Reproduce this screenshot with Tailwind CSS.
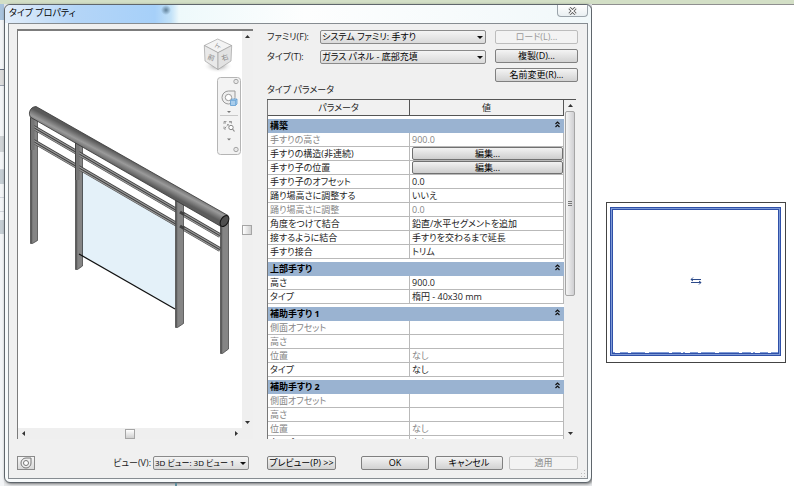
<!DOCTYPE html>
<html lang="ja">
  <head>
    <meta charset="UTF-8" />
    <meta name="viewport" content="width=device-width, initial-scale=1.0" />
    <title>タイプ プロパティ</title>
    <script src="https://cdn.jsdelivr.net/npm/@tailwindcss/browser@4"></script>
  </head>
  <body
    class="h-screen flex flex-col overflow-hidden bg-white font-['Open_Sans','Noto_Sans_CJK_JP',sans-serif] text-[9px] leading-[12px] text-[#1c1c1c] [font-feature-settings:'palt']"
  >
    <!-- Application strip behind the dialog -->
    <div class="h-1 shrink-0 bg-[#d3dfc6]"></div>

    <div class="flex-1 min-h-0 flex">
      <!-- Docked palette, mostly covered -->
      <div class="w-1 shrink-0 flex flex-col bg-[#f3f5f7]">
        <div class="h-4 bg-[#a9c3dd]"></div>
        <div class="h-[50px] border-b border-gray-500"></div>
        <div class="h-[16px] border-b border-gray-400 bg-[#dcdcdc]"></div>
        <div class="h-[50px]"></div>
        <div class="h-4 bg-[#cfd3d6]"></div>
        <div class="h-[18px] border-b border-gray-300"></div>
        <div class="h-[14px] bg-[#c4cdd3]"></div>
        <div class="h-[14px] border-b border-gray-300"></div>
        <div class="h-[14px] border-b border-gray-300"></div>
        <div class="h-[14px] mt-2 bg-[#c4cdd3]"></div>
      </div>

      <div class="w-[588px] shrink-0 flex flex-col bg-[#e6e8ea]">
        <!-- Dialog -->
        <div
          class="flex-1 min-h-0 flex flex-col rounded-md border border-[#5f666c] bg-[#f7fafb] px-[3px] pb-[3px] shadow-[1px_1px_3px_rgba(0,0,0,0.5)]"
        >
          <!-- Title bar -->
          <div
            class="h-[18px] -mx-[3px] pl-1 pr-[3px] shrink-0 flex items-start justify-between rounded-t-md bg-[radial-gradient(circle_at_161px_5px,#5f8099_0,#5f809900_5px),linear-gradient(to_right,#e3eefa_0,#b4d5f7_70px,#a6d0f9_150px,#c3e2f8_166px,#eef9fb_174px,#fdfefe_300px,#f1f8fa_100%)]"
          >
            <h1 class="pt-px leading-[14px] text-black">タイプ プロパティ</h1>
            <button
              aria-label="閉じる"
              class="w-[31px] h-[12px] flex items-center justify-center rounded-b border border-t-0 border-[#9aa3aa] bg-linear-to-b from-white to-[#e9eff2]"
            >
              <svg width="9" height="8" viewBox="0 0 9 8" fill="none">
                <path d="M1.5 1L7.5 7M7.5 1L1.5 7" stroke="#555" stroke-width="3" />
                <path d="M1.5 1L7.5 7M7.5 1L1.5 7" stroke="#fff" stroke-width="1.2" />
              </svg>
            </button>
          </div>

          <!-- Client area -->
          <div
            class="relative flex-1 min-h-0 flex flex-col border border-[#868c91] bg-[#f0f0f0] pl-2 pr-[9px] pt-[5px] pb-2"
          >
            <div class="flex-1 min-h-0 flex gap-[14px]">
              <!-- 3D preview -->
              <div
                class="w-[236px] shrink-0 flex flex-col border-t-2 border-l border-[#7c7c7c] bg-[#efefef]"
              >
                <div class="flex-1 min-h-0 flex">
                  <div class="flex-1 min-w-0 bg-white">
                    <svg
                      class="w-full h-full"
                      viewBox="18 31 224 397"
                      preserveAspectRatio="xMinYMin meet"
                      fill="none"
                    >
                      <defs>
                        <linearGradient id="tube" gradientUnits="userSpaceOnUse" x1="131" y1="160" x2="125" y2="171.500">
                          <stop offset="0" stop-color="#5a5a5a" />
                          <stop offset="0.500" stop-color="#9a9a9a" />
                          <stop offset="1" stop-color="#5c5c5c" />
                        </linearGradient>
                        <radialGradient id="shade">
                          <stop offset="0" stop-color="#888" />
                          <stop offset="1" stop-color="#fff" stop-opacity="0" />
                        </radialGradient>
                      </defs>

                      <!-- glass panel -->
                      <path d="M82 172L175 225V309L82 256Z" fill="#e4f1f9" />
                      <path d="M82.500 171V256" stroke="#8eb4c6" />

                      <!-- posts -->
                      <g fill="#858585" stroke="#3a3a3a" stroke-width="0.7">
                        <path d="M30.500 114V243.500H32.500L37.500 240.500V118Z" />
                        <path d="M75.500 142V269.500H77.500L82.500 266V146Z" />
                        <path d="M220.500 223V353.500H222.500L228.500 349V221Z" />
                      </g>
                      <path d="M31.500 118V243M76.500 144V269M221.500 226V353" stroke="#5c5c5c" stroke-width="1.500" />

                      <!-- intermediate rails -->
                      <g stroke="#3f3f3f" stroke-width="4.600">
                        <path d="M33 127L220 235.500" />
                        <path d="M33 141L220 249.500" />
                      </g>
                      <g stroke="#999" stroke-width="1.200">
                        <path d="M33 125.900L220 234.400M33 128.400L220 236.900" />
                        <path d="M33 139.900L220 248.400M33 142.400L220 250.900" />
                      </g>
                      <path d="M30.500 118H34.500V150H30.500ZM75.500 143H79.500V180H75.500Z" fill="#757575" />
                      <path d="M30.500 118V150M75.500 143V180" stroke="#3a3a3a" stroke-width="0.800" />

                      <!-- front post of the glass bay -->
                      <path d="M175.500 200V327.500H177.500L183.500 323.500V204Z" fill="#858585" stroke="#3a3a3a" stroke-width="0.700" />
                      <path d="M176.500 201V327" stroke="#5c5c5c" stroke-width="1.500" />
                      <path d="M180 212L184 214.500M180 226L184 228.500" stroke="#3f3f3f" stroke-width="3" />
                      <path d="M79 254L175 309" stroke="#111" stroke-width="1.300" />

                      <!-- top handrail -->
                      <path
                        d="M36 106.500L228 215.500L221 226.500L31 117.500C28 115 29 107 36 106.500Z"
                        fill="url(#tube)"
                        stroke="#333"
                        stroke-width="0.800"
                      />
                      <ellipse cx="224.500" cy="221" rx="3.600" ry="6" transform="rotate(32 224.500 221)" fill="#4f4f4f" stroke="#111" />

                      <!-- view cube -->
                      <ellipse cx="218" cy="66" rx="15" ry="7" fill="url(#shade)" />
                      <g stroke="#a0a0a0" stroke-width="0.700" stroke-linejoin="round">
                        <path d="M217.700 39L231.700 45.500L218 52.700L204.300 45.500Z" fill="#f4f4f4" />
                        <path d="M204.300 45.500L218 52.700V69.500L205 61Z" fill="#e9e9e9" />
                        <path d="M231.700 45.500L218 52.700V69.500L231 61Z" fill="#e2e2e2" />
                      </g>
                      <g fill="#888" font-size="7" text-anchor="middle">
                        <text x="218" y="48" font-size="6" transform="rotate(120 218 46)">上</text>
                        <text x="211" y="60" transform="rotate(20 211 58)">前</text>
                        <text x="225" y="60" transform="rotate(-20 225 58)">右</text>
                      </g>

                      <!-- navigation bar -->
                      <rect x="217.500" y="77.500" width="23" height="77" rx="3" fill="#f3f3f3" stroke="#b5b5b5" />
                      <g stroke="#a5a5a5" fill="#e8e8e8">
                        <circle cx="236" cy="81.500" r="2.200" />
                        <circle cx="236" cy="149.500" r="2.200" />
                      </g>
                      <path d="M222 97.500A6.500 6.500 0 0 1 228.500 91H235V97.500A6.500 6.500 0 0 1 222 97.500Z" fill="#eee" stroke="#999" />
                      <circle cx="228.500" cy="97.500" r="3.200" fill="#fff" stroke="#999" />
                      <path d="M230.500 100.500L232 99H237V104L235.500 105.500H230.500Z" fill="#a9cdec" stroke="#5f9cd0" stroke-width="0.800" />
                      <path d="M230.500 100.500H235.500V105.500M235.500 100.500L237 99" stroke="#5f9cd0" stroke-width="0.600" />
                      <path d="M227 111H231L229 113ZM227 138.500H231L229 140.500Z" fill="#777" />
                      <path d="M220 115.500H238" stroke="#c8c8c8" />
                      <path d="M224.500 122L231 128M231 121.500L224.500 128.500" stroke="#888" stroke-dasharray="2 1.500" />
                      <path d="M224 124V121.500H226.500M229 121.500H231.500V123.500M224 126.500V129H226" stroke="#888" stroke-width="0.800" />
                      <circle cx="231" cy="127.500" r="2.200" fill="#fff" stroke="#888" />
                      <path d="M232.500 129L234.500 131.500" stroke="#888" stroke-width="1.200" />
                    </svg>
                  </div>
                  <!-- Vertical scrollbar -->
                  <div class="w-[10px] mr-px flex flex-col items-center justify-between py-1">
                    <svg width="5" height="3"><path d="M0 3L2.500 0L5 3Z" fill="#333" /></svg>
                    <div class="w-[10px] h-[10px] border border-[#a5a5a5] bg-linear-to-r from-white to-[#d0d0d0]"></div>
                    <svg width="5" height="3"><path d="M0 0L2.500 3L5 0Z" fill="#333" /></svg>
                  </div>
                </div>
                <!-- Horizontal scrollbar -->
                <div class="h-[11px] mr-[11px] flex items-center justify-between px-1">
                  <svg width="3" height="5"><path d="M3 0L0 2.500L3 5Z" fill="#333" /></svg>
                  <div class="w-[10px] h-[10px] border border-[#a5a5a5] bg-linear-to-b from-white to-[#d0d0d0]"></div>
                  <svg width="3" height="5"><path d="M0 0L3 2.500L0 5Z" fill="#333" /></svg>
                </div>
              </div>

              <!-- Type settings -->
              <div class="flex-1 min-w-0 flex flex-col">
                <div class="flex items-start justify-between pt-px">
                  <div class="grid grid-cols-[53px_166px] items-center gap-y-[6px]">
                    <label for="family">ファミリ(F):</label>
                    <div class="relative">
                      <select
                        id="family"
                        class="block w-full h-[14px] appearance-none rounded-xs border border-[#8a8a8a] bg-linear-to-b from-[#f4f4f4] to-[#dadada] pl-px leading-[12px] text-black"
                      >
                        <option>システム ファミリ: 手すり</option>
                      </select>
                      <svg class="absolute right-[3px] top-[6px] pointer-events-none" width="6" height="3"><path d="M0 0H6L3 3Z" fill="#111" /></svg>
                    </div>
                    <label for="type">タイプ(T):</label>
                    <div class="relative">
                      <select
                        id="type"
                        class="block w-full h-[14px] appearance-none rounded-xs border border-[#8a8a8a] bg-linear-to-b from-[#f4f4f4] to-[#dadada] pl-px leading-[12px] text-black"
                      >
                        <option>ガラス パネル - 底部充填</option>
                      </select>
                      <svg class="absolute right-[3px] top-[6px] pointer-events-none" width="6" height="3"><path d="M0 0H6L3 3Z" fill="#111" /></svg>
                    </div>
                  </div>
                  <div class="w-[83px] flex flex-col gap-[5px]">
                    <button disabled class="h-[14px] rounded-xs border border-[#bdbdbd] bg-[#f3f3f3] leading-[12px] text-[#999]">ロード(L)...</button>
                    <button class="h-[14px] rounded-xs border border-[#808080] bg-linear-to-b from-[#f4f4f4] to-[#d2d2d2] leading-[12px] text-black">複製(D)...</button>
                    <button class="h-[14px] rounded-xs border border-[#808080] bg-linear-to-b from-[#f4f4f4] to-[#d2d2d2] leading-[12px] text-black">名前変更(R)...</button>
                  </div>
                </div>
                <h2 class="mt-[2px] mb-[3px] leading-[12px]">タイプ パラメータ</h2>

                <!-- Parameter grid -->
                <div class="flex-1 min-h-0 mr-[2px] flex border-t border-[#555] overflow-hidden">
                  <div class="flex-1 min-w-0 overflow-hidden bg-white border-l border-[#777]">
                    <table class="w-full table-fixed border-separate border-spacing-0 leading-[13px]">
                      <colgroup>
                        <col class="w-[142px]" />
                        <col />
                      </colgroup>
                      <thead>
                        <tr class="bg-[#f1f1f1] leading-[15px]">
                          <th class="p-0 border-b border-r border-[#555] font-normal">パラメータ</th>
                          <th class="p-0 border-b border-r border-[#555] font-normal">値</th>
                        </tr>
                      </thead>
                      <tbody id="params"></tbody>
                    </table>
                  </div>
                  <!-- Grid scrollbar -->
                  <div class="w-[12px] flex flex-col items-center pt-1 pb-1">
                    <svg width="5" height="3"><path d="M0 3L2.500 0L5 3Z" fill="#333" /></svg>
                    <div
                      class="mt-1 w-[10px] h-[185px] shrink-0 flex flex-col items-center justify-center gap-px rounded-xs border border-[#a5a5a5] bg-linear-to-r from-[#f5f5f5] to-[#cfcfd2]"
                    >
                      <div class="w-1 h-px bg-[#777]"></div>
                      <div class="w-1 h-px bg-[#777]"></div>
                      <div class="w-1 h-px bg-[#777]"></div>
                    </div>
                    <svg class="mt-auto" width="5" height="3"><path d="M0 0L2.500 3L5 0Z" fill="#333" /></svg>
                  </div>
                </div>
              </div>
            </div>

            <!-- Footer -->
            <div class="mt-[16px] h-[15px] shrink-0 flex items-center gap-[18px]">
              <div class="w-[232px] flex items-center">
                <button aria-label="ナビゲーション" class="w-[18px] h-[14px] flex items-center justify-center border border-[#8a8a8a] bg-linear-to-b from-[#f6f6f6] to-[#d8d8d8]">
                  <svg width="12" height="12" viewBox="0 0 12 12" fill="none" stroke="#777">
                    <path d="M1 6A5 5 0 0 1 6 1H11V6A5 5 0 0 1 1 6Z" fill="#eee" />
                    <circle cx="6" cy="6" r="2.500" fill="#fff" />
                  </svg>
                </button>
                <label for="view" class="ml-auto mr-[2px]">ビュー(V):</label>
                <div class="relative w-[96px]">
                  <select
                    id="view"
                    class="block w-full h-[14px] appearance-none rounded-xs border border-[#8a8a8a] bg-linear-to-b from-[#f4f4f4] to-[#dadada] pl-px text-[8px] leading-[12px] text-black"
                  >
                    <option>3D ビュー: 3D ビュー 1</option>
                  </select>
                  <svg class="absolute right-[3px] top-[6px] pointer-events-none" width="6" height="3"><path d="M0 0H6L3 3Z" fill="#111" /></svg>
                </div>
              </div>
              <div class="flex-1 flex gap-[6px] whitespace-nowrap">
                <button class="w-[69px] h-[14px] mr-auto rounded-xs border border-[#808080] bg-linear-to-b from-[#f4f4f4] to-[#d2d2d2] leading-[12px] text-black">プレビュー(P) &gt;&gt;</button>
                <button class="w-[68px] h-[14px] rounded-xs border border-[#808080] bg-linear-to-b from-[#f4f4f4] to-[#d2d2d2] leading-[12px] text-black">OK</button>
                <button class="w-[68px] h-[14px] rounded-xs border border-[#808080] bg-linear-to-b from-[#f4f4f4] to-[#d2d2d2] leading-[12px] text-black">キャンセル</button>
                <button disabled class="w-[69px] h-[14px] rounded-xs border border-[#c3c3c3] bg-[#f3f3f3] leading-[12px] text-[#888]">適用</button>
              </div>
            </div>

            <!-- Resize grip -->
            <svg class="absolute right-0 bottom-0" width="8" height="8" fill="#bbb">
              <path d="M5 0h1v1h-1zM5 3h1v1h-1zM2 3h1v1h-1zM5 6h1v1h-1zM2 6h1v1h-1z" />
            </svg>
          </div>
        </div>
        <div class="h-[3px] shrink-0 pl-[171px]">
          <div class="w-[2px] h-full bg-[#5f8f9f]"></div>
        </div>
      </div>

      <!-- Drawing area -->
      <main class="flex-1 min-w-0 border-t border-[#8f8f8f] bg-white pl-[14px] pr-2 pt-[197px]">
        <div class="h-[161px] border border-[#444] pt-1 pr-1 pb-[6px] pl-[3px]">
          <div class="h-full border border-[#2f50a8] bg-[#7f9bd6] p-px">
            <div class="h-full flex flex-col items-center border border-[#2f50a8] bg-white">
              <svg class="my-auto" width="12" height="8" viewBox="0 0 12 8" fill="none" stroke="#2c4a8a">
                <path d="M11 2.500H1L3 0.500M1 2.500L3 4M1 5.500H11L9 4M11 5.500L9 7.500" />
              </svg>
              <svg class="w-full h-px" stroke="#7f9bd6">
                <path d="M0 0.500H600" stroke-dasharray="2 5 8 3 14 4 20 3 9 2" />
              </svg>
            </div>
          </div>
        </div>
      </main>
    </div>

    <script>
      const sections = [
        {
          title: "構築",
          rows: [
            ["手すりの高さ", "900.0", "disabled"],
            ["手すりの構造(非連続)", "編集...", "button"],
            ["手すり子の位置", "編集...", "button"],
            ["手すり子のオフセット", "0.0"],
            ["踊り場高さに調整する", "いいえ"],
            ["踊り場高さに調整", "0.0", "disabled"],
            ["角度をつけて結合", "鉛直/水平セグメントを追加"],
            ["接するように結合", "手すりを交わるまで延長"],
            ["手すり接合", "トリム"],
          ],
        },
        {
          title: "上部手すり",
          rows: [
            ["高さ", "900.0"],
            ["タイプ", "楕円 - 40x30 mm"],
          ],
        },
        {
          title: "補助手すり 1",
          rows: [
            ["側面オフセット", "", "disabled"],
            ["高さ", "", "disabled"],
            ["位置", "なし", "disabled"],
            ["タイプ", "なし"],
          ],
        },
        {
          title: "補助手すり 2",
          rows: [
            ["側面オフセット", "", "disabled"],
            ["高さ", "", "disabled"],
            ["位置", "なし", "disabled"],
            ["タイプ", "なし"],
          ],
        },
      ];

      const editButton = (text) =>
        `<button class="block w-full h-[13px] rounded-xs border border-[#707070] bg-linear-to-b from-[#f2f2f2] to-[#cdcdcd] leading-[11px] text-black">${text}</button>`;

      // Group header followed by its parameter rows
      document.getElementById("params").innerHTML = sections
        .map(
          ({ title, rows }) =>
            `<tr>
              <th colspan="2" class="p-0 border-t-[3px] border-white text-left font-bold text-black">
                <div class="h-[14px] flex justify-between bg-[#9ab3d1] pl-[2px] pr-1 leading-[14px]">
                  ${title}
                  <svg class="mt-[2px]" width="5" height="7" viewBox="0 0 5 7" fill="none" stroke="#111" stroke-width="1.2"><path d="M0.5 3L2.5 1L4.5 3M0.5 6L2.5 4L4.5 6" /></svg>
                </div>
              </th>
            </tr>` +
            rows
              .map(
                ([name, value, kind]) =>
                  `<tr class="h-[14px] ${kind === "disabled" ? "text-[#858585]" : "text-[#1c1c1c]"}">
                    <td class="p-0 pl-[2px] border-b border-r border-[#b9b9b9] whitespace-nowrap">${name}</td>
                    <td class="p-0 pl-[2px] border-b border-r border-[#b9b9b9] whitespace-nowrap">${kind === "button" ? editButton(value) : value}</td>
                  </tr>`
              )
              .join("")
        )
        .join("");
    </script>
  </body>
</html>
